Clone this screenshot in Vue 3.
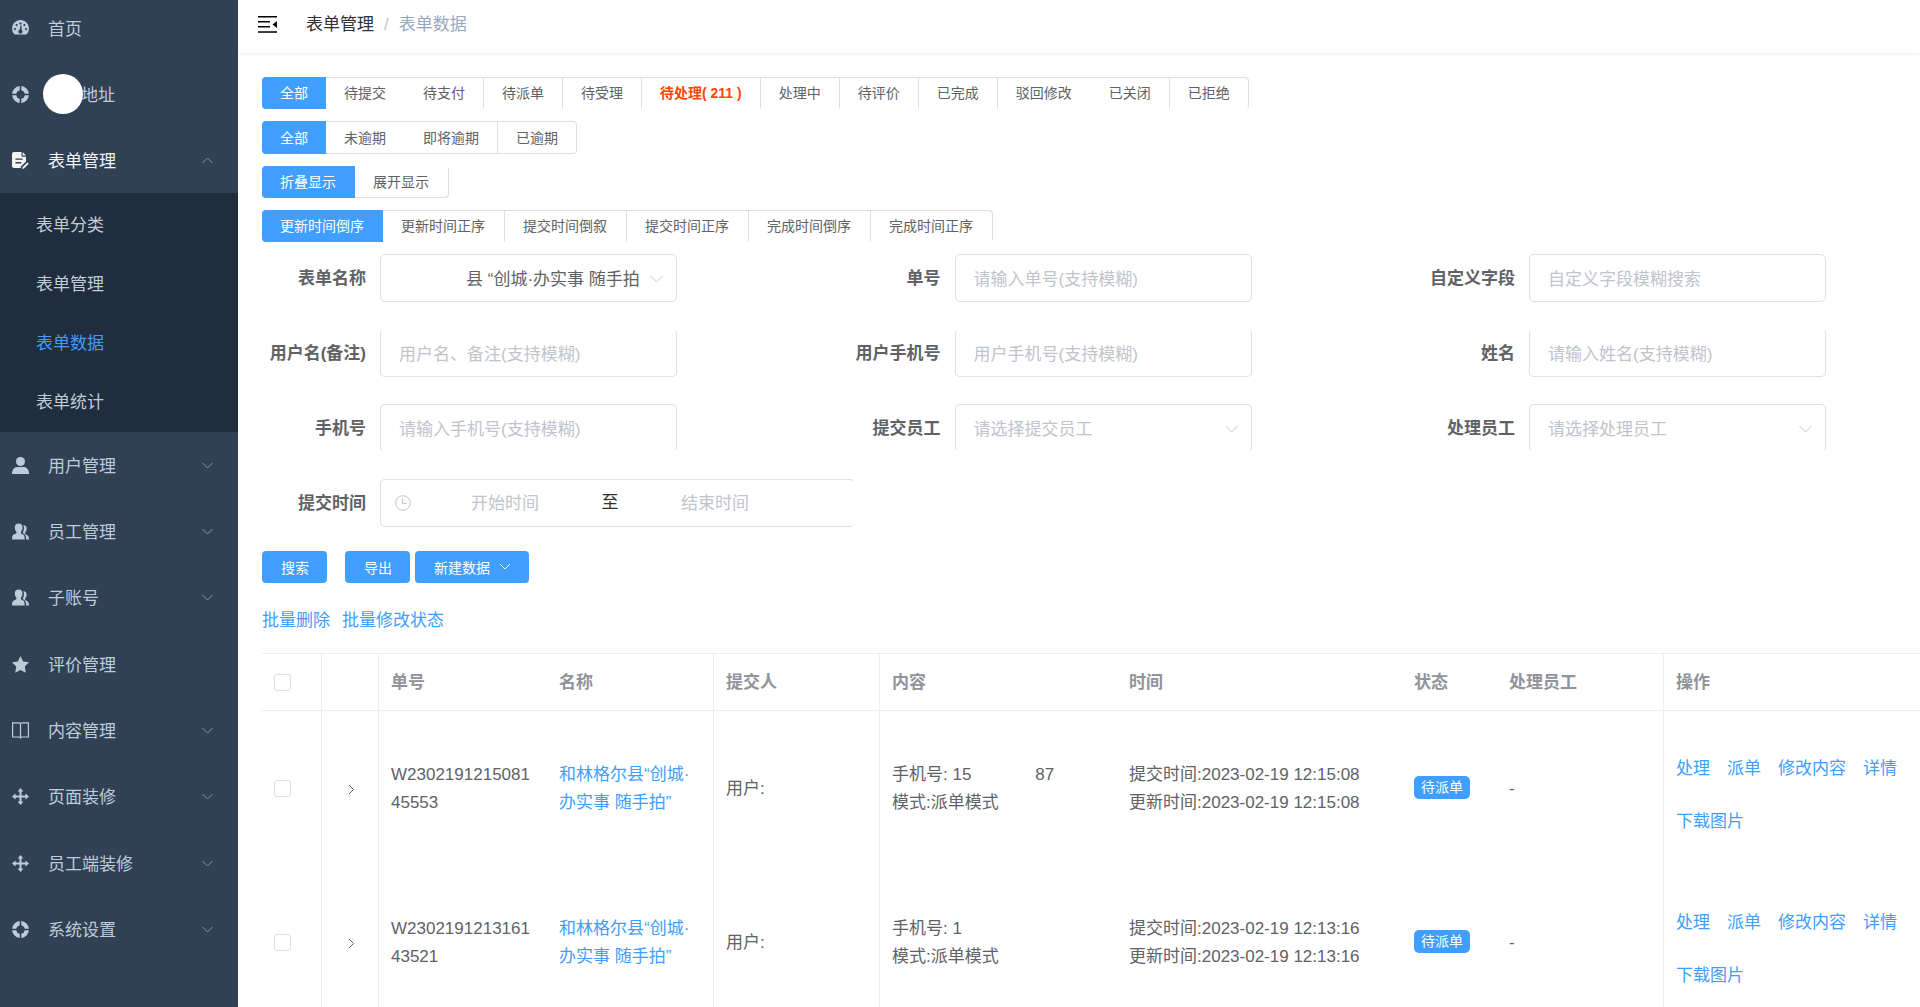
<script setup>
import { ref } from 'vue'

const topMenu = [
  { icon: 'dashboard', label: '首页' },
  { icon: 'help', label: '地址', avatar: true },
  { icon: 'form', label: '表单管理', open: true },
]
const subMenu = ['表单分类', '表单管理', '表单数据', '表单统计']
const lowerMenu = [
  { icon: 'user', label: '用户管理', arrow: true },
  { icon: 'users', label: '员工管理', arrow: true },
  { icon: 'users', label: '子账号', arrow: true },
  { icon: 'star', label: '评价管理' },
  { icon: 'book', label: '内容管理', arrow: true },
  { icon: 'move', label: '页面装修', arrow: true },
  { icon: 'move', label: '员工端装修', arrow: true },
  { icon: 'help', label: '系统设置', arrow: true },
]

const icons = {
  dashboard:
    '<path fill-rule="evenodd" d="M2.6 14.6A8.5 8.5 0 1 1 14.4 14.6ZM8.5 2.4a1 1 0 1 0 .01 0ZM4.6 4.1a1 1 0 1 0 .01 0ZM12.4 4.1a1 1 0 1 0 .01 0ZM2.9 7.9a1 1 0 1 0 .01 0ZM14.1 7.9a1 1 0 1 0 .01 0ZM8.6 5.5L7.6 9.8A2 2 0 1 0 9.6 10L9.6 5.6Z"/>',
  help:
    '<path d="M7.7 0.1V4.2A4.4 4.4 0 0 0 4.2 7.7H0.1A8.4 8.4 0 0 1 7.7 0.1ZM9.3 0.1V4.2A4.4 4.4 0 0 1 12.8 7.7H16.9A8.4 8.4 0 0 0 9.3 0.1ZM7.7 16.9V12.8A4.4 4.4 0 0 1 4.2 9.3H0.1A8.4 8.4 0 0 0 7.7 16.9ZM9.3 16.9V12.8A4.4 4.4 0 0 0 12.8 9.3H16.9A8.4 8.4 0 0 1 9.3 16.9Z"/>',
  form:
    '<path fill-rule="evenodd" d="M2 0H9.5V3.8Q9.5 4.8 10.5 4.8H14V9.5L8.8 14.6V16H2Q0 16 0 14V2Q0 0 2 0ZM3.4 6.4V7.8H10.6V6.4ZM3.4 10V11.4H9.4V10Z"/><path d="M10.6 0L14 3.6H10.6ZM15.4 10.4L16.8 11.8L12 16.4L9.9 16.8L10.4 15.2Z"/>',
  user:
    '<circle cx="8.5" cy="4.5" r="4.5"/><path d="M0 17V15.5Q1 10 5.5 10H11.5Q16 10 17 15.5V17Z"/>',
  users:
    '<path d="M6.7 0.4C9.2 0.4 10.5 2 10.5 4.4C10.5 6.4 9.8 7.4 8.9 8.4V10.2L11.8 12Q12.7 12.8 12.7 16.4H0Q0 13 1 12L4.4 10.2V8.4C3.4 7.4 2.8 6.4 2.8 4.4C2.8 2 4.2 0.4 6.7 0.4Z"/><path d="M11.4 2C13.7 2.2 14.8 3.8 14.6 6C14.5 7.8 13.9 8.7 13.1 9.5V11L15.8 12.6Q17 13.8 17 16.4H14.2Q14.2 12.6 12.6 11.2L10.6 9.8C11.9 8 12.5 4.6 11.4 2Z"/>',
  star:
    '<path d="M8.5 0L11.1 5.5L17 6.3L12.8 10.5L13.8 16.8L8.5 13.9L3.2 16.8L4.2 10.5L0 6.3L5.9 5.5Z"/>',
  book:
    '<path fill="none" stroke="currentColor" stroke-width="1.2" d="M0.6 0.8H7Q8.5 0.8 8.5 2Q8.5 0.8 10 0.8H16.4V15H10Q8.5 15 8.5 16.4Q8.5 15 7 15H0.6ZM8.5 2V16"/>',
  move:
    '<path d="M8.5 0L11.4 3.6H9.5V7.5H13.4V5.6L17 8.5L13.4 11.4V9.5H9.5V13.4H11.4L8.5 17L5.6 13.4H7.5V9.5H3.6V11.4L0 8.5L3.6 5.6V7.5H7.5V3.6H5.6Z"/>',
}

const filterGroups = [
  {
    look: 'no-bottom',
    items: [
      { text: '全部' }, { text: '待提交', joined: true }, { text: '待支付' }, { text: '待派单' },
      { text: '待受理' }, { text: '待处理( 211 )', alert: true }, { text: '处理中' }, { text: '待评价' },
      { text: '已完成' }, { text: '驳回修改', joined: true }, { text: '已关闭' }, { text: '已拒绝' },
    ],
  },
  { look: 'closed', items: [{ text: '全部' }, { text: '未逾期', joined: true }, { text: '即将逾期' }, { text: '已逾期' }] },
  { look: 'no-top wide', items: [{ text: '折叠显示' }, { text: '展开显示' }] },
  {
    look: 'no-bottom wide',
    items: [
      { text: '更新时间倒序' }, { text: '更新时间正序' }, { text: '提交时间倒叙' },
      { text: '提交时间正序' }, { text: '完成时间倒序' }, { text: '完成时间正序' },
    ],
  },
]
const selected = ref([0, 0, 0, 0])

const fields = [
  { id: 'form-name', label: '表单名称', type: 'select', value: '县 “创城·办实事 随手拍' },
  { id: 'order-no', label: '单号', hint: '请输入单号(支持模糊)' },
  { id: 'custom', label: '自定义字段', hint: '自定义字段模糊搜索' },
  { id: 'nick', label: '用户名(备注)', hint: '用户名、备注(支持模糊)', edge: 'no-top' },
  { id: 'user-phone', label: '用户手机号', hint: '用户手机号(支持模糊)', edge: 'no-top' },
  { id: 'name', label: '姓名', hint: '请输入姓名(支持模糊)', edge: 'no-top' },
  { id: 'phone', label: '手机号', hint: '请输入手机号(支持模糊)', edge: 'no-bottom' },
  { id: 'submitter', label: '提交员工', type: 'select', hint: '请选择提交员工', edge: 'no-bottom' },
  { id: 'handler', label: '处理员工', type: 'select', hint: '请选择处理员工', edge: 'no-bottom' },
]

const rows = [
  { no: 'W230219121508145553', phone: '15', tail: '87', time: '2023-02-19 12:15:08' },
  { no: 'W230219121316143521', phone: '1', tail: '', time: '2023-02-19 12:13:16' },
]
const actions = ['处理', '派单', '修改内容', '详情', '下载图片']
</script>

<template>
  <div class="layout">
    <nav class="sidebar">
      <ul class="menu menu-top">
        <li v-for="m in topMenu" :key="m.label">
          <a href="#" class="menu-item" :class="{ open: m.open }">
            <svg class="menu-icon" viewBox="0 0 17 17" v-html="icons[m.icon]"></svg>
            <span v-if="m.avatar" class="avatar"></span>
            <span class="menu-label">{{ m.label }}</span>
            <svg v-if="m.open" class="menu-arrow" viewBox="0 0 11 7"><path d="M.5 6L5.5 1L10.5 6" /></svg>
          </a>
          <ul v-if="m.open" class="submenu">
            <li v-for="s in subMenu" :key="s">
              <a href="#" :class="{ active: s === '表单数据' }">{{ s }}</a>
            </li>
          </ul>
        </li>
      </ul>
      <ul class="menu menu-lower">
        <li v-for="m in lowerMenu" :key="m.label">
          <a href="#" class="menu-item">
            <svg class="menu-icon" viewBox="0 0 17 17" v-html="icons[m.icon]"></svg>
            <span class="menu-label">{{ m.label }}</span>
            <svg v-if="m.arrow" class="menu-arrow" viewBox="0 0 11 7"><path d="M.5 1L5.5 6L10.5 1" /></svg>
          </a>
        </li>
      </ul>
    </nav>

    <div class="page">
      <header class="topbar">
        <button class="fold" aria-label="收起菜单">
          <svg viewBox="0 0 19 17">
            <path d="M0 0H19V1.5H0ZM0 5H12V6.5H0ZM0 10H12V11.5H0ZM0 15.3H19V16.8H0ZM19 5V12L14.5 8.5Z" />
          </svg>
        </button>
        <div class="crumbs">
          <a href="#">表单管理</a><span class="slash">/</span><span class="current">表单数据</span>
        </div>
      </header>

      <main class="content">
        <div class="filters">
          <div v-for="(g, gi) in filterGroups" :key="gi" class="group" :class="g.look">
            <button
              v-for="(it, i) in g.items"
              :key="it.text"
              :class="{ on: selected[gi] === i, joined: it.joined, alert: it.alert }"
              @click="selected[gi] = i"
            >{{ it.text }}</button>
          </div>
        </div>

        <form class="search" @submit.prevent>
          <div v-for="f in fields" :key="f.id" class="field">
            <label :for="f.id">{{ f.label }}</label>
            <div v-if="f.type === 'select'" class="select">
              <select :id="f.id" class="box" :class="[f.edge, f.value ? 'filled' : '']">
                <option>{{ f.value || f.hint }}</option>
              </select>
              <svg viewBox="0 0 13 8"><path d="M.5 1L6.5 7L12.5 1" /></svg>
            </div>
            <input v-else :id="f.id" class="box" :class="f.edge" type="text" :placeholder="f.hint" />
          </div>
          <div class="field range-field">
            <label for="start">提交时间</label>
            <div class="range">
              <svg viewBox="0 0 16 16"><circle cx="8" cy="8" r="7.3" /><path d="M7.5 3.5V8.5H11.5" /></svg>
              <input id="start" type="text" placeholder="开始时间" />
              <span>至</span>
              <input id="end" type="text" placeholder="结束时间" aria-label="结束时间" />
            </div>
          </div>
        </form>

        <div class="buttons">
          <button class="search-btn">搜索</button>
          <button>导出</button>
          <button>新建数据<svg viewBox="0 0 12 8"><path d="M1 1L6 6L11 1" /></svg></button>
        </div>

        <div class="batch"><a href="#">批量删除</a><a href="#">批量修改状态</a></div>

        <table>
          <colgroup>
            <col class="c-check" /><col class="c-expand" /><col class="c-no" /><col class="c-name" />
            <col class="c-user" /><col class="c-content" /><col class="c-time" /><col class="c-state" />
            <col class="c-staff" /><col />
          </colgroup>
          <thead>
            <tr>
              <th class="line check"><input type="checkbox" aria-label="全选" /></th>
              <th class="line"></th>
              <th>单号</th>
              <th class="line">名称</th>
              <th class="line">提交人</th>
              <th>内容</th>
              <th>时间</th>
              <th>状态</th>
              <th class="line">处理员工</th>
              <th>操作</th>
            </tr>
          </thead>
          <tbody>
            <tr v-for="r in rows" :key="r.no">
              <td class="line check"><input type="checkbox" :aria-label="r.no" /></td>
              <td class="line expand">
                <button aria-label="展开"><svg viewBox="0 0 7 11"><path d="M1 1L5.5 5.5L1 10" /></svg></button>
              </td>
              <td class="no">{{ r.no }}</td>
              <td class="line"><a href="#">和林格尔县“创城·<br />办实事 随手拍”</a></td>
              <td class="line">用户:</td>
              <td>手机号: {{ r.phone }}<span class="tail">{{ r.tail }}</span><br />模式:派单模式</td>
              <td>提交时间:{{ r.time }}<br />更新时间:{{ r.time }}</td>
              <td class="state"><span class="tag">待派单</span></td>
              <td class="line">-</td>
              <td><div class="actions"><a v-for="a in actions" :key="a" href="#">{{ a }}</a></div></td>
            </tr>
          </tbody>
        </table>
      </main>
    </div>
  </div>
</template>

<style>
body {
  overflow: hidden;
}
</style>

<style scoped>
.layout {
  display: flex;
  height: 100vh;
  overflow: hidden;
  background: #fff;
  color: #606266;
  font: 17px/28px "Liberation Sans", "Noto Sans CJK SC", sans-serif;
}
* {
  box-sizing: border-box;
}
a {
  color: #409eff;
  text-decoration: none;
}
button,
input,
select {
  font-family: inherit;
  margin: 0;
}
ul {
  list-style: none;
  margin: 0;
  padding: 0;
}
svg {
  display: block;
  flex: none;
}

/* sidebar */
.sidebar {
  flex: none;
  width: 238px;
  display: flex;
  flex-direction: column;
  background: #304156;
}
.menu-top {
  margin-top: -5px;
}
.menu-lower {
  flex: 1;
  display: grid;
  grid-auto-rows: 1fr;
  padding-bottom: 44px;
}
.menu-item {
  display: flex;
  align-items: center;
  height: 66px;
  padding: 0 25px 0 12px;
  color: #bfcbd9;
}
.menu-item.open {
  color: #f4f4f5;
}
.menu-icon {
  width: 17px;
  height: 17px;
  margin-right: 19px;
  fill: currentColor;
}
.menu-label {
  flex: 1;
  padding-top: 3px;
}
.menu-arrow {
  width: 11px;
  height: 7px;
  fill: none;
  stroke: #909399;
}
.avatar {
  width: 40px;
  height: 40px;
  margin: 0 -2px 0 -5px;
  border-radius: 50%;
  background: #fff;
}
.submenu {
  padding: 3px 0 0;
  background: #1f2d3d;
}
.submenu a {
  display: block;
  padding-left: 36px;
  line-height: 59px;
  color: #bfcbd9;
}
.submenu a.active {
  color: #409eff;
}

/* header */
.page {
  flex: 1;
  min-width: 0;
}
.topbar {
  display: flex;
  align-items: center;
  height: 53px;
  padding: 0 20px 5px;
  box-shadow: 0 1px 4px rgba(0, 21, 41, 0.08);
}
.fold {
  padding: 0;
  border: 0;
  background: none;
}
.fold svg {
  width: 19px;
  height: 17px;
}
.crumbs {
  margin-left: 29px;
  padding-top: 2px;
}
.crumbs a {
  color: #303133;
}
.slash {
  margin: 0 10px;
  color: #c0c4cc;
}
.current {
  color: #97a8be;
}

.content {
  padding: 24px 0 0 24px;
}

/* filter groups */
.filters {
  display: flex;
  flex-direction: column;
  gap: 12px;
}
.group {
  display: flex;
}
.group button {
  height: 32px;
  padding: 0 18px;
  border: 1px solid #dcdfe6;
  border-left: 0;
  background: #fff;
  color: #606266;
  font-size: 14px;
  line-height: 30px;
}
.group.closed button {
  height: 33px;
}
.group.wide button {
  padding: 0 19px 0 18px;
}
.group button:first-child {
  border-radius: 4px 0 0 4px;
}
.group button:last-child {
  border-radius: 0 4px 4px 0;
}
.group button.joined {
  border-right-color: transparent;
}
.group.no-bottom button {
  border-bottom-color: transparent;
}
.group.no-top button {
  border-top-color: transparent;
}
.group button.on {
  border-width: 1px;
  border-right-width: 0;
  border-color: #409eff;
  background: #409eff;
  color: #fff;
}
.group button.alert {
  color: #ff4500;
  font-weight: bold;
}

/* search form */
.search {
  display: grid;
  grid-template-columns: repeat(3, 415px);
  justify-content: space-between;
  row-gap: 27px;
  margin: 12px 94px 0 0;
}
.field {
  display: flex;
  align-items: center;
}
.field label {
  flex: none;
  width: 118px;
  padding: 2px 14px 0 0;
  text-align: right;
  font-weight: bold;
}
.box {
  flex: 1;
  min-width: 0;
  width: 100%;
  height: 48px;
  padding: 3px 18px 0;
  border: 1px solid #dcdfe6;
  border-radius: 5px;
  background: #fff;
  color: #c0c4cc;
  font-size: 17px;
  appearance: none;
}
.box.no-top {
  border-top-color: transparent;
}
.box.no-bottom {
  border-bottom-color: transparent;
}
.box.filled {
  padding: 3px 26px 0 85px;
  color: #606266;
}
input::placeholder {
  color: #c0c4cc;
  opacity: 1;
}
.select {
  position: relative;
  flex: 1;
}
.select svg {
  position: absolute;
  right: 14px;
  top: 21px;
  width: 13px;
  height: 8px;
  fill: none;
  stroke: #c0c4cc;
  pointer-events: none;
}
.range-field {
  grid-column: span 2;
}
.range {
  display: flex;
  align-items: center;
  width: 475px;
  height: 48px;
  padding: 0 14px;
  border: 1px solid #dcdfe6;
  border-right-color: transparent;
  border-radius: 5px;
}
.range svg {
  width: 16px;
  height: 16px;
  fill: none;
  stroke: #c0c4cc;
}
.range input {
  width: 188px;
  padding: 2px 0 0;
  border: 0;
  background: none;
  text-align: center;
  font-size: 17px;
}
.range span {
  width: 22px;
  text-align: center;
  color: #303133;
}

/* buttons */
.buttons {
  display: flex;
  gap: 5px;
  margin-top: 24px;
}
.buttons button {
  display: flex;
  align-items: center;
  height: 32px;
  padding: 0 18px 0 19px;
  border: 0;
  border-radius: 4px;
  background: #409eff;
  color: #fff;
  font-size: 14px;
}
.buttons .search-btn {
  margin-right: 13px;
}
.buttons svg {
  width: 12px;
  height: 8px;
  margin-left: 9px;
  fill: none;
  stroke: #fff;
}
.batch {
  display: flex;
  gap: 12px;
  margin: 24px 0 18px;
}

/* table */
table {
  width: 100%;
  table-layout: fixed;
  border-collapse: separate;
  border-spacing: 0;
}
.c-check { width: 60px; }
.c-expand { width: 57px; }
.c-no { width: 168px; }
.c-name { width: 167px; }
.c-user { width: 166px; }
.c-content { width: 237px; }
.c-time { width: 285px; }
.c-state { width: 95px; }
.c-staff { width: 167px; }
th,
td {
  padding: 2px 12px 0;
  text-align: left;
  vertical-align: middle;
}
th {
  height: 58px;
  border-top: 1px solid #ebeef5;
  border-bottom: 1px solid #ebeef5;
  color: #909399;
}
td {
  height: 154px;
}
.check {
  padding-top: 0;
}
.state {
  padding: 0 12px 2px;
}
.line {
  border-right: 1px solid #ebeef5;
}
.no {
  word-break: break-all;
}
.expand button {
  display: block;
  margin-left: 14px;
  padding: 0;
  border: 0;
  background: none;
}
.expand svg {
  width: 7px;
  height: 11px;
  fill: none;
  stroke: #606266;
}
input[type="checkbox"] {
  display: block;
  width: 17px;
  height: 17px;
  border: 1px solid #dcdfe6;
  border-radius: 3px;
  background: #fff;
  appearance: none;
}
.tail {
  margin-left: 64px;
}
.tag {
  display: block;
  width: max-content;
  padding: 0 7px;
  border-radius: 5px;
  background: #409eff;
  color: #fff;
  font-size: 14px;
  line-height: 23px;
}
.actions {
  display: flex;
  flex-wrap: wrap;
  gap: 25px 17px;
  padding-top: 12px;
}
</style>
